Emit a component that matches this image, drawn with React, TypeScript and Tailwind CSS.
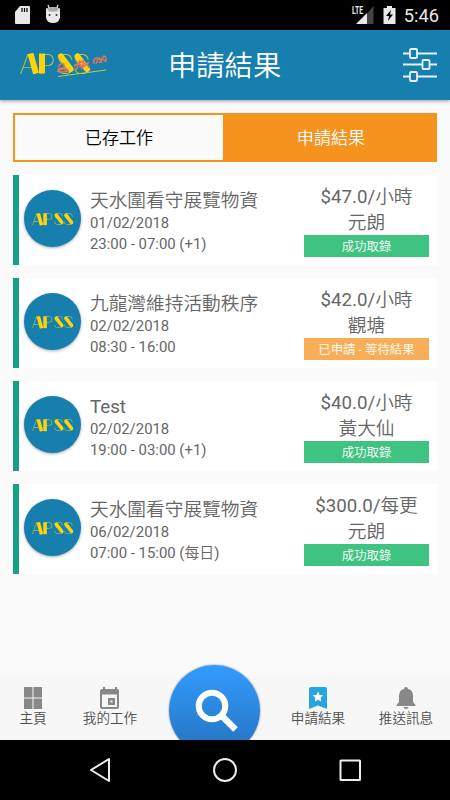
import clsx from 'clsx';

const jobs = [
  { title: '天水圍看守展覽物資', date: '01/02/2018', time: '23:00 - 07:00 (+1)', pay: '$47.0/小時', area: '元朗', status: '成功取錄', ok: true },
  { title: '九龍灣維持活動秩序', date: '02/02/2018', time: '08:30 - 16:00', pay: '$42.0/小時', area: '觀塘', status: '已申請 - 等待結果', ok: false },
  { title: 'Test', date: '02/02/2018', time: '19:00 - 03:00 (+1)', pay: '$40.0/小時', area: '黃大仙', status: '成功取錄', ok: true },
  { title: '天水圍看守展覽物資', date: '06/02/2018', time: '07:00 - 15:00 (每日)', pay: '$300.0/每更', area: '元朗', status: '成功取錄', ok: true },
];

// thin lettering with heavy accent strokes on top
function Logo({ className, signature }: { className: string; signature?: boolean }) {
  return (
    <svg viewBox="0 0 88 34" className={className} fill="none">
      <text x="-.5 18 36.5 53" y="27.500" fill="#d3d22c" className="text-[28px] font-thin">APSS</text>
      <g stroke="#ffd20a" strokeWidth="6">
        <path d="M10.500 7.500L16 27.500" />
        <path d="M22 7.500V27.500" />
        <path d="M41 10.500L50.500 23M57.500 10.500L67 23" strokeLinecap="round" />
      </g>
      {signature && (
        <g transform="translate(0 4)">
          <path d="M38 17q4-6 6-2t-5 5q4-4 8-1t-7 3q-5-1 1-4l8 3M54 16l9-5m-7 9l4-10m-5 5q5-3 8 3m1-8l-2 8 7-6m-6 1q5 1 6 5m-10-1l9-3M74 14q-1-5 2-6t0 6m3-7l3 6m-3 0l5-7q4 2 1 6m-8-3l8 1" stroke="#e0775a" strokeWidth="1.500" />
          <path d="M38 26.500L86 20" stroke="#c5cb31" strokeWidth="1" />
        </g>
      )}
    </svg>
  );
}

function StatusBar() {
  return (
    <div className="flex h-[30px] shrink-0 items-center bg-black pr-[11px] pl-[15px] text-[#e8e8e8]">
      <svg width="15" height="18" viewBox="0 0 15 18" fill="#e8e8e8">
        <path d="M5 0h9q1 0 1 1v16q0 1-1 1H1q-1 0-1-1V6z" />
        <path d="M7 2v4M9.500 2v4M12 2v4" stroke="#000" strokeWidth="1.200" />
      </svg>
      <svg width="16" height="19" viewBox="0 0 16 19" className="mb-1 ml-[15px]" fill="#e8e8e8">
        <path d="M3 1l1.500 4M13 1l-1.500 4" stroke="#e8e8e8" strokeWidth="1.300" />
        <path d="M1 4.500q7-3 14 0v9q-1 5.500-7 5.500t-7-5.500z" />
        <path d="M2 4.500q6-2.500 12 0l-2 3H4z" fill="#aaa" />
        <circle cx="4.500" cy="11" r="1" fill="#333" />
        <circle cx="11.500" cy="11" r="1" fill="#333" />
      </svg>
      <div className="ml-auto flex items-center">
        <svg width="24" height="20" viewBox="0 0 24 20">
          <path d="M17 8.500L23.500 1V19H17z" fill="#444" />
          <path d="M6 19L17 8V19z" fill="#e8e8e8" />
          <text x="2" y="9" textLength="11" lengthAdjust="spacingAndGlyphs" fill="#e8e8e8" className="text-[10.500px] font-bold">LTE</text>
        </svg>
        <svg width="13" height="18" viewBox="0 0 13 18" className="ml-[9px]">
          <path d="M4 0h5v2h3.500v16H.5V2H4z" fill="#e8e8e8" />
          <path d="M8 4L3 10h3l-1 5 5-6.500H7z" fill="#000" />
        </svg>
        <span className="ml-2 pt-px text-[18.300px] leading-[30px]">5:46</span>
      </div>
    </div>
  );
}

function Header() {
  return (
    <header className="z-10 flex h-[70px] shrink-0 items-center bg-[#177fad] pr-[13px] pl-5 text-white shadow-[0_1px_4px_rgba(0,0,0,0.4)]">
      <Logo signature className="mb-1 h-[34px] w-[88px]" />
      <h1 className="ml-[60px] pt-[5px] text-[28.300px] leading-none">申請結果</h1>
      <svg width="34" height="34" viewBox="0 0 34 34" fill="none" stroke="#e4f4fc" strokeWidth="1.800" className="ml-auto">
        <path d="M0 5.500h7M14 5.500h20M0 16.500h19M27 16.500h7M0 28.500h7M14 28.500h20" />
        <rect x="7" y="1" width="7" height="9" rx="1" />
        <rect x="19.500" y="12" width="7" height="9" rx="1" />
        <rect x="7" y="24" width="7" height="9" rx="1" />
      </svg>
    </header>
  );
}

function JobCard({ job }: { job: (typeof jobs)[number] }) {
  return (
    <li className="flex h-[90px] border-l-6 border-[#16a085] bg-white pr-2 pl-[5px] text-[#666]">
      <div className="mt-[15px] flex size-[57px] shrink-0 items-center justify-center rounded-full bg-[#177fad] shadow-[0_1px_3px_rgba(0,0,0,0.35)]">
        <Logo className="ml-[11px] h-5 w-[52px] shrink-0" />
      </div>
      <div className="ml-[9px] flex-1 pt-3.5 whitespace-nowrap">
        <h2 className="text-[18.700px] leading-6">{job.title}</h2>
        <p className="text-[14.900px] leading-[21px]">{job.date}</p>
        <p className="text-[14.900px] leading-5">{job.time}</p>
      </div>
      <div className="w-[125px] shrink-0 pt-[9px] text-center">
        <p className="pt-px text-[18.700px] leading-[25px]">{job.pay}</p>
        <p className="pt-px text-[18.700px] leading-[25px]">{job.area}</p>
        <p className={clsx('-mt-px h-[22px] text-[12.400px] leading-6 text-white', job.ok ? 'bg-[#3fc380]' : 'bg-[#f8ae56]')}>{job.status}</p>
      </div>
    </li>
  );
}

function NavItem({ label, className, children }: { label: string; className: string; children: React.ReactNode }) {
  return (
    <div className={clsx('flex flex-col items-center pt-3', className)}>
      <svg width="22" height="22" viewBox="0 0 22 22" fill="#888">{children}</svg>
      <span className="text-[13.600px] leading-[18px] text-[#505050]">{label}</span>
    </div>
  );
}

function BottomNav() {
  return (
    <nav className="relative flex h-[65px] shrink-0 bg-[#f7f7f7]">
      <NavItem label="主頁" className="w-[66px]">
        <path d="M2 0h8.500v10.500H2zM11.500 0H20v10.500h-8.500zM2 11.500h8.500V22H2zM11.500 11.500H20V22h-8.500z" />
      </NavItem>
      <NavItem label="我的工作" className="w-[88px]">
        <path fillRule="evenodd" d="M4 0h2v2h10V0h2v2q2 0 2 2v16q0 2-2 2H3q-2 0-2-2V4q0-2 2-2h1zM3 7.500V20h15V7.500z" />
        <path fillRule="evenodd" d="M9 11h7v7H9zM11.500 13.500v2h2v-2z" />
      </NavItem>
      <div className="w-[120px]">
        {/* the round button rises above the bar and is cut off by its lower edge */}
        <div className="absolute -top-3 left-[166px] h-[77px] w-24 overflow-hidden">
          <div className="mx-auto mt-0.5 flex size-[91px] items-center justify-center rounded-full bg-linear-to-b from-[#339cff] to-[#2472bd] shadow-[0_0_2px_rgba(0,0,0,0.5)]">
            <svg width="44" height="44" viewBox="0 0 44 44" fill="none" stroke="#fff" className="ml-1.5">
              <circle cx="17" cy="17" r="13.300" strokeWidth="6" />
              <path d="M26 26L40.500 40.500" strokeWidth="6.500" />
            </svg>
          </div>
        </div>
      </div>
      <NavItem label="申請結果" className="w-[88px]">
        <path d="M4 0h14q2 0 2 2v20l-9-3.500L2 22V2q0-2 2-2z" fill="#27a5dc" />
        <path d="M11 4.500l1.600 3.400 3.700.4-2.700 2.500.7 3.700-3.300-1.800-3.300 1.800.7-3.700-2.700-2.500 3.700-.4z" fill="#fff" />
      </NavItem>
      <NavItem label="推送訊息" className="w-[88px]">
        <path d="M11 0q2 0 2 2 5 1 5 7v6l2.500 3v1h-19v-1L4 15V9q0-6 5-7 0-2 2-2zM8.500 20h5q-.5 2-2.500 2t-2.500-2z" />
      </NavItem>
    </nav>
  );
}

export default function App() {
  return (
    <div className="flex h-[800px] w-[450px] flex-col overflow-hidden bg-[#fafafa] font-['Roboto','Noto_Sans_CJK_TC_DemiLight','Noto_Sans_CJK_TC_Light','Noto_Sans_CJK_TC',sans-serif]">
      <StatusBar />
      <Header />
      <main className="flex-1 px-[13px] pt-[13px]">
        <div className="flex h-[49px] border-2 border-[#f6921e] text-[17.100px] leading-[47px]">
          <div className="w-[208px] text-center text-black">已存工作</div>
          <div className="h-[45px] flex-1 bg-[#f6921e] pl-1 text-center text-white">申請結果</div>
        </div>
        <ul className="mt-[13px] space-y-[13px]">
          {jobs.map((job, i) => <JobCard key={i} job={job} />)}
        </ul>
      </main>
      <BottomNav />
      <div className="flex h-[60px] shrink-0 items-center bg-black">
        <svg width="450" height="60" viewBox="0 0 450 60" fill="none" stroke="#eee" strokeWidth="2" strokeLinejoin="round">
          <path d="M109 19L91 30l18 11z" />
          <circle cx="225" cy="30" r="11" />
          <rect x="340.500" y="20.500" width="19.500" height="19.500" rx=".5" />
        </svg>
      </div>
    </div>
  );
}
